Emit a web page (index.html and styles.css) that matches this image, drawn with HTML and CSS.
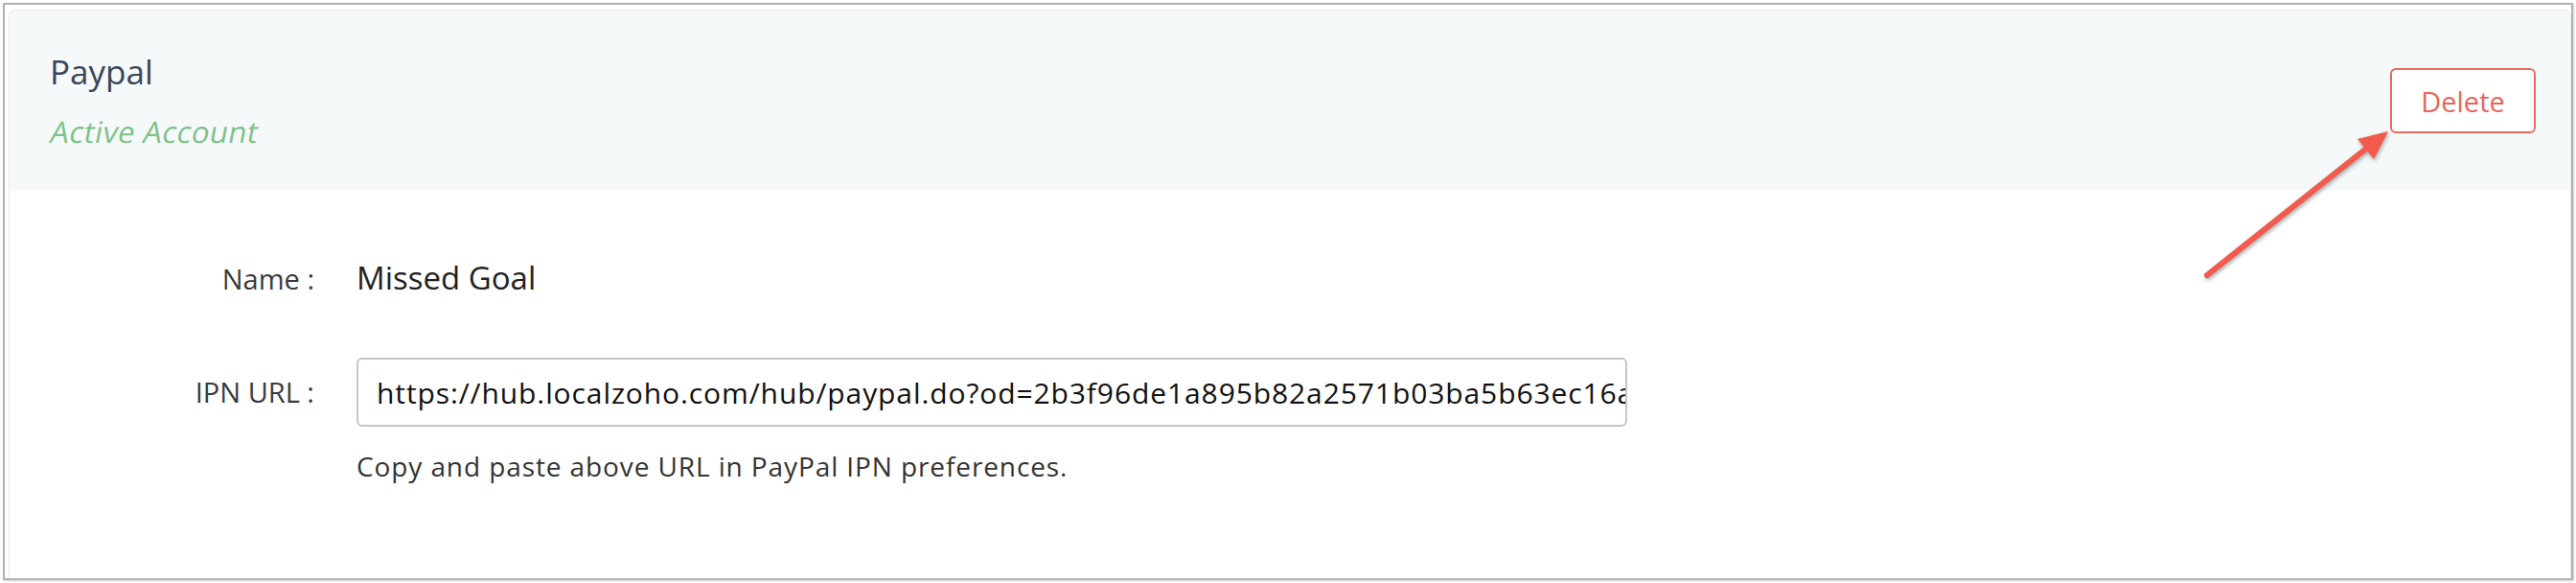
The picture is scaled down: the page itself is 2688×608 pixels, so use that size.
FILE: index.html
```html
<!DOCTYPE html>
<html lang="en">
<head>
<meta charset="utf-8">
<title>Paypal</title>
<link rel="stylesheet" href="styles.css">
</head>
<body>
<div class="frame">
  <div class="card">
    <div class="card-head">
      <div class="head-text">
        <div class="title">Paypal</div>
        <div class="status">Active Account</div>
      </div>
      <button class="btn-delete" type="button">Delete</button>
    </div>
    <div class="card-body">
      <div class="row row-name">
        <div class="label">Name :</div>
        <div class="value">Missed Goal</div>
      </div>
      <div class="row row-url">
        <div class="label label-url">IPN URL :</div>
        <div class="field">
          <input class="url-input" type="text" readonly value="https://hub.localzoho.com/hub/paypal.do?od=2b3f96de1a895b82a2571b03ba5b63ec16a8f0e2c1">
          <div class="help">Copy and paste above URL in PayPal IPN preferences.</div>
        </div>
      </div>
    </div>
  </div>
</div>
<svg class="annot" width="2688" height="608" viewBox="0 0 2688 608" xmlns="http://www.w3.org/2000/svg">
  <g class="arrow">
    <line x1="2303" y1="287" x2="2474" y2="151" stroke="#f15a4c" stroke-width="6" stroke-linecap="round"/>
    <polygon points="2492,137 2460,145 2477,166" fill="#f15a4c"/>
  </g>
</svg>
</body>
</html>
```

FILE: styles.css
```css
html, body {
  margin: 0;
  padding: 0;
  background: #ffffff;
}
body {
  width: 2688px;
  height: 608px;
  overflow: hidden;
  position: relative;
  font-family: "Open Sans", "Noto Sans", sans-serif;
}
.frame {
  margin: 3px 0 0 3px;
  width: 2682px;
  height: 602px;
  box-sizing: border-box;
  border: 2px solid #b2b2b2;
  box-shadow: 1px 1px 2px rgba(0,0,0,0.18);
  padding: 5px 0 0 4px;
  background: #ffffff;
  display: flex;
}
.card {
  flex: 1;
  border: 1px solid #e6e6e6;
  border-bottom: none;
  border-radius: 8px 8px 0 0;
  overflow: hidden;
  display: flex;
  flex-direction: column;
}
.card-head {
  background: #f6f9fa;
  height: 187px;
  box-sizing: border-box;
  padding: 40px 36px 0 42px;
  display: flex;
  justify-content: space-between;
  align-items: flex-start;
}
.title {
  font-size: 35px;
  color: #3a4659;
  line-height: 48px;
}
.status {
  margin-top: 18px;
  margin-left: -3px;
  font-size: 31px;
  letter-spacing: 0.4px;
  color: #7cc387;
  line-height: 41px;
  transform: skewX(-11deg);
  transform-origin: 0 100%;
}
.btn-delete {
  margin-top: 20px;
  width: 152px;
  height: 68px;
  box-sizing: border-box;
  border: 2px solid #ea6861;
  border-radius: 6px;
  background: #ffffff;
  color: #e8655d;
  font-family: "Open Sans", "Noto Sans", sans-serif;
  font-size: 29px;
  padding: 0;
}
.card-body {
  padding-top: 69px;
  display: flex;
  flex-direction: column;
}
.row {
  display: grid;
  grid-template-columns: 318px 1fr;
  column-gap: 44px;
}
.row-name {
  align-items: baseline;
}
.label {
  text-align: right;
  font-size: 29px;
  color: #3a3a3a;
  line-height: 40px;
}
.value {
  font-size: 33px;
  color: #222222;
  line-height: 45px;
}
.row-url {
  margin-top: 61px;
}
.label-url {
  margin-top: 16px;
}
.field {
  display: flex;
  flex-direction: column;
}
.url-input {
  width: 1326px;
  height: 72px;
  box-sizing: border-box;
  border: 2px solid #c6c6c6;
  border-radius: 6px;
  padding: 0 0 0 19px;
  font-family: "Open Sans", "Noto Sans", sans-serif;
  font-size: 30px;
  letter-spacing: 0.9px;
  color: #111111;
  background: #ffffff;
  outline: none;
  margin: 0;
}
.help {
  margin-top: 22px;
  font-size: 28px;
  letter-spacing: 0.9px;
  color: #333333;
  line-height: 38px;
}
.annot {
  position: absolute;
  left: 0;
  top: 0;
  pointer-events: none;
}
.arrow {
  filter: drop-shadow(1px 2px 2px rgba(0,0,0,0.35));
}
```
